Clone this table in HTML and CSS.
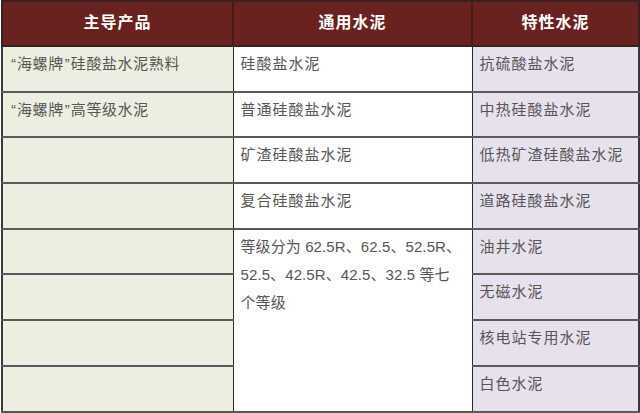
FILE: index.html
```html
<!DOCTYPE html>
<html lang="zh-CN">
<head>
<meta charset="utf-8">
<title>主导产品</title>
<link rel="stylesheet" href="styles.css">
</head>
<body>
<table class="products">
  <colgroup>
    <col class="c1">
    <col class="c2">
    <col class="c3">
  </colgroup>
  <thead>
    <tr class="head">
      <th>主导产品</th>
      <th>通用水泥</th>
      <th>特性水泥</th>
    </tr>
  </thead>
  <tbody>
    <tr>
      <td class="main"><span class="q">“</span>海螺牌<span class="q">”</span>硅酸盐水泥熟料</td>
      <td class="gen">硅酸盐水泥</td>
      <td class="spec">抗硫酸盐水泥</td>
    </tr>
    <tr>
      <td class="main"><span class="q">“</span>海螺牌<span class="q">”</span>高等级水泥</td>
      <td class="gen">普通硅酸盐水泥</td>
      <td class="spec">中热硅酸盐水泥</td>
    </tr>
    <tr>
      <td class="main"></td>
      <td class="gen">矿渣硅酸盐水泥</td>
      <td class="spec">低热矿渣硅酸盐水泥</td>
    </tr>
    <tr>
      <td class="main"></td>
      <td class="gen">复合硅酸盐水泥</td>
      <td class="spec">道路硅酸盐水泥</td>
    </tr>
    <tr>
      <td class="main"></td>
      <td class="gen grades" rowspan="4">等级分为 62.5R、62.5、52.5R、<br>52.5、42.5R、42.5、32.5 等七<br>个等级</td>
      <td class="spec">油井水泥</td>
    </tr>
    <tr>
      <td class="main"></td>
      <td class="spec">无磁水泥</td>
    </tr>
    <tr>
      <td class="main"></td>
      <td class="spec">核电站专用水泥</td>
    </tr>
    <tr>
      <td class="main"></td>
      <td class="spec">白色水泥</td>
    </tr>
  </tbody>
</table>
</body>
</html>
```

FILE: styles.css
```css
html, body {
  margin: 0;
  padding: 0;
  background: #ffffff;
}

body {
  padding: 0 0 0 1px;
  font-family: "Liberation Sans", "Noto Sans CJK SC", sans-serif;
}

.products {
  border-collapse: collapse;
  table-layout: fixed;
  width: 637px;
  border: 2px solid #3a3a3a;
}

.c1 { width: 231px; }
.c2 { width: 239px; }
.c3 { width: 167px; }

.head {
  height: 45px;
}

.head th {
  background: #6a2220;
  color: #ffffff;
  font-family: "Noto Sans CJK SC", sans-serif;
  font-weight: bold;
  font-size: 16px;
  letter-spacing: 1px;
  text-align: center;
  vertical-align: middle;
  padding: 0 0 6px 0;
  border: 2px solid #3a2020;
}

tbody tr {
  height: 45.7px;
}

tbody td {
  vertical-align: top;
  padding: 3px 6px 0 7px;
  font-size: 15px;
  line-height: 28px;
  letter-spacing: 0.6px;
  color: #565656;
  white-space: nowrap;
  border-top: 2px solid #5a5a5a;
  border-bottom: 2px solid #5a5a5a;
  border-left: 1px solid #2a2a2a;
  border-right: 1px solid #2a2a2a;
}

.main {
  background: #eceedf;
}

.gen {
  background: #ffffff;
  letter-spacing: 1px;
}

.grades {
  letter-spacing: 0.1px;
  padding-right: 2px;
}

.spec {
  background: #e6e1ed;
  letter-spacing: 1px;
}

.q {
  font-family: "Liberation Sans", sans-serif;
  letter-spacing: 0;
  margin: 0 1px;
}
```
